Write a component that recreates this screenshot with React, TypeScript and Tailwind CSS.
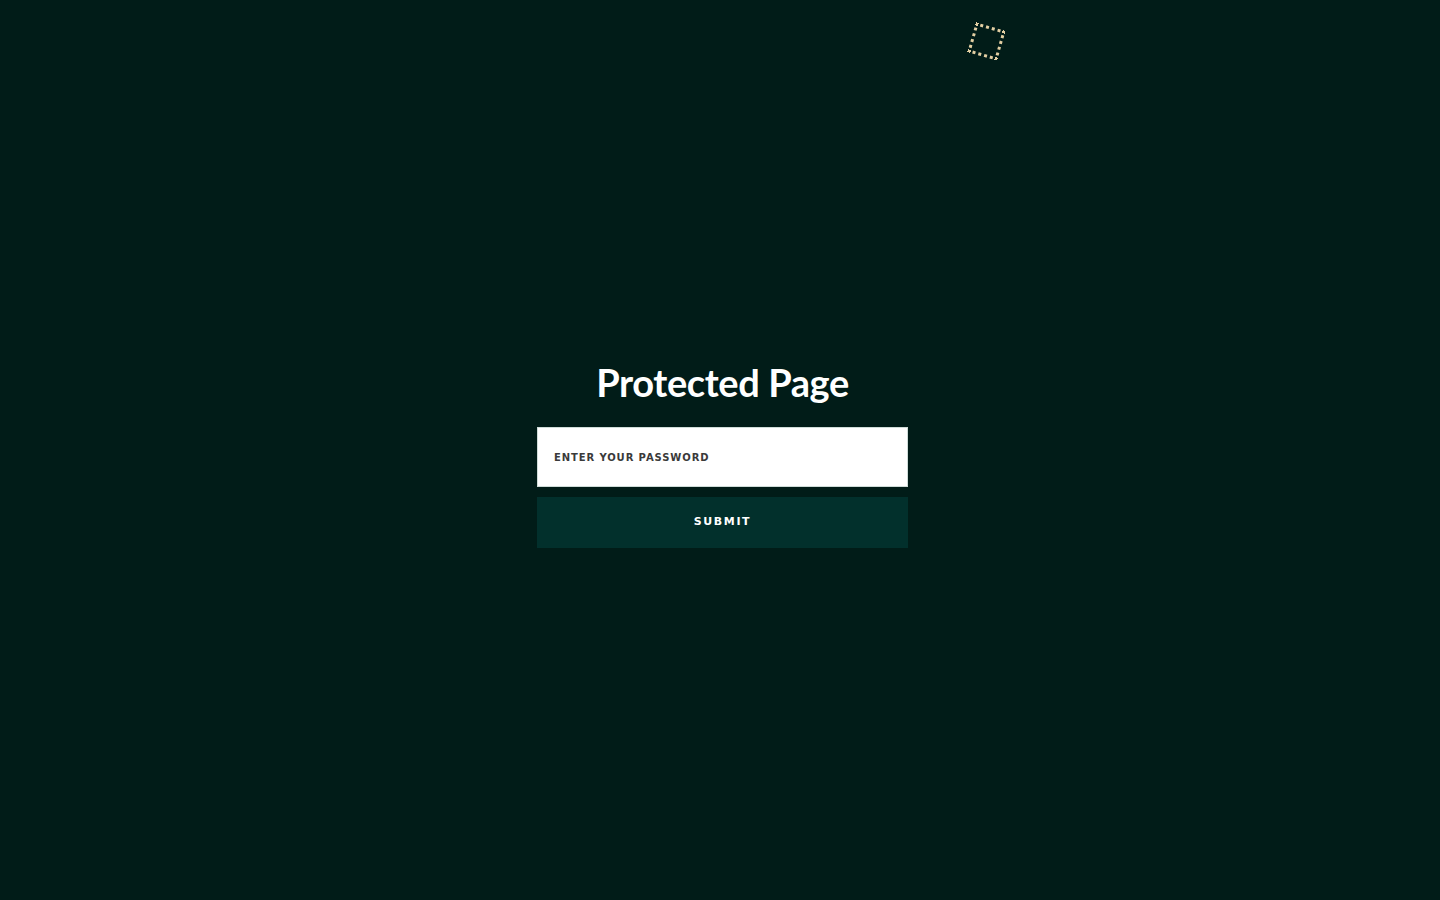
import { useState } from "react";

export default function App() {
    const [password, setPassword] = useState<string>("");

    return (
        <div className="relative min-h-screen w-full bg-[#011c18] flex items-center justify-center overflow-hidden">
            {/* little dotted stamp in the corner */}
            <div className="absolute left-[971px] top-[26px] w-[31px] h-[31px] border-[3px] border-dotted border-[#e3cfa3] rotate-[16deg]" />

            <div className="flex flex-col items-center w-[371px] ml-[5px] mt-[8px]">
                <h1 className="text-white text-[38px] leading-[44px] font-bold tracking-[-0.4px] font-['Lato','Inter',sans-serif] mb-[23px]">
                    Protected Page
                </h1>
                <form
                    className="w-full flex flex-col gap-[10px]"
                    onSubmit={(e) => e.preventDefault()}
                >
                    <input
                        type="password"
                        value={password}
                        autoFocus
                        onChange={(e) => setPassword(e.target.value)}
                        placeholder="ENTER YOUR PASSWORD"
                        className="w-full h-[60px] bg-white border border-[#cfdcd8] px-[16px] text-[10px] font-bold tracking-[0.9px] text-[#222] placeholder:text-[#3a3a3a] outline-none font-['DejaVu_Sans',sans-serif]"
                    />
                    <button
                        type="submit"
                        className="w-full h-[51px] bg-[#02302c] text-white text-[11px] font-bold tracking-[1.6px] font-['DejaVu_Sans',sans-serif]"
                    >
                        SUBMIT
                    </button>
                </form>
            </div>
        </div>
    );
}
